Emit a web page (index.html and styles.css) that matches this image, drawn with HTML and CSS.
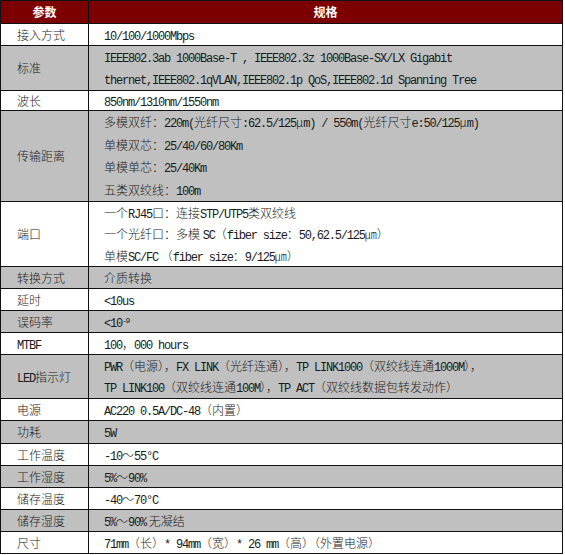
FILE: index.html
```html
<!DOCTYPE html>
<html lang="zh-CN">
<head>
<meta charset="utf-8">
<title>参数规格</title>
<link rel="stylesheet" href="styles.css">
</head>
<body>
<table class="spec">
  <colgroup><col class="c-key"><col class="c-val"></colgroup>
  <thead>
    <tr><th>参数</th><th>规格</th></tr>
  </thead>
  <tbody>
    <tr><td>接入方式</td><td><span class="en">10/100/1000Mbps</span></td></tr>
    <tr class="gray l2"><td>标准</td><td><span class="en">IEEE802.3ab 1000Base-T , IEEE802.3z 1000Base-SX/LX Gigabit</span><br><span class="en">thernet,IEEE802.1qVLAN,IEEE802.1p QoS,IEEE802.1d Spanning Tree</span></td></tr>
    <tr class="short"><td>波长</td><td><span class="en">850nm/1310nm/1550nm</span></td></tr>
    <tr class="gray l4"><td>传输距离</td><td>多模双纤：<span class="en">220m(</span>光纤尺寸<span class="en">:62.5/125</span>μ<span class="en">m) / 550m(</span>光纤尺寸<span class="en">e:50/125</span>μ<span class="en">m)</span><br>单模双芯：<span class="en">25/40/60/80Km</span><br>单模单芯：<span class="en">25/40Km</span><br>五类双绞线：<span class="en">100m</span></td></tr>
    <tr class="l3"><td>端口</td><td>一个<span class="en">RJ45</span>口：连接<span class="en">STP/UTP5</span>类双绞线<br>一个光纤口：多模 <span class="en">SC</span>（<span class="en">fiber size</span>：<span class="en">50,62.5/125</span>㎛）<br>单模<span class="en">SC/FC</span> （<span class="en">fiber size</span>：<span class="en">9/125</span>㎛）</td></tr>
    <tr class="gray"><td>转换方式</td><td>介质转换</td></tr>
    <tr><td>延时</td><td><span class="en">&lt;10us</span></td></tr>
    <tr class="gray"><td>误码率</td><td><span class="en">&lt;10<sup>-9</sup></span></td></tr>
    <tr><td><span class="en">MTBF</span></td><td><span class="en">100</span>，<span class="en">000 hours</span></td></tr>
    <tr class="gray l2b"><td><span class="en">LED</span>指示灯</td><td><span class="en">PWR</span>（电源），<span class="en">FX LINK</span>（光纤连通），<span class="en">TP LINK1000</span>（双绞线连通<span class="en">1000M</span>），<br><span class="en">TP LINK100</span>（双绞线连通<span class="en">100M</span>），<span class="en">TP ACT</span>（双绞线数据包转发动作）</td></tr>
    <tr><td>电源</td><td><span class="en">AC220 0.5A/DC-48</span>（内置）</td></tr>
    <tr class="gray tall"><td>功耗</td><td><span class="en">5W</span></td></tr>
    <tr><td>工作温度</td><td><span class="en">-10</span>～<span class="en">55°C</span></td></tr>
    <tr class="gray"><td>工作湿度</td><td><span class="en">5%</span>～<span class="en">90%</span></td></tr>
    <tr><td>储存温度</td><td><span class="en">-40</span>～<span class="en">70°C</span></td></tr>
    <tr class="gray"><td>储存湿度</td><td><span class="en">5%</span>～<span class="en">90%</span> 无凝结</td></tr>
    <tr><td>尺寸</td><td><span class="en">71mm</span>（长）<span class="en">* 94mm</span>（宽）<span class="en">* 26 mm</span>（高）（外置电源）</td></tr>
  </tbody>
</table>
</body>
</html>
```

FILE: styles.css
```css
html, body {
  margin: 0;
  padding: 0;
  background: #ffffff;
}

.spec {
  width: 563px;
  border-collapse: collapse;
  table-layout: fixed;
  font-family: "Noto Sans CJK SC", "Noto Sans", sans-serif;
  font-size: 12px;
  font-weight: 300;
  color: #222;
}

.c-key { width: 88px; }

.spec th,
.spec td {
  border: 1px solid #111;
  padding: 0 0 0 16px;
  line-height: 21px;
  text-align: left;
  vertical-align: middle;
  white-space: nowrap;
}

.spec td:last-child {
  padding-left: 15px;
}

.spec th {
  background: #7d0000;
  color: #ffffff;
  font-weight: bold;
  text-align: center;
  padding: 0;
  line-height: 22px;
}

.spec .gray td {
  background: #c0c0c0;
}

.spec .short td { line-height: 19px; }
.spec .tall td { line-height: 22px; }
.spec .l2 td { line-height: 22px; }
.spec .l2b td { line-height: 21.5px; }
.spec .l4 td { line-height: 22.5px; }
.spec .l3 td { line-height: 21.33px; }

.spec .en {
  font-family: "Liberation Mono", monospace;
  font-size: 12px;
  font-weight: normal;
  line-height: 1;
  letter-spacing: -1.2px;
  color: #1a1a1a;
}

.spec sup {
  font-size: 8px;
  line-height: 0;
  vertical-align: 4px;
}
```
